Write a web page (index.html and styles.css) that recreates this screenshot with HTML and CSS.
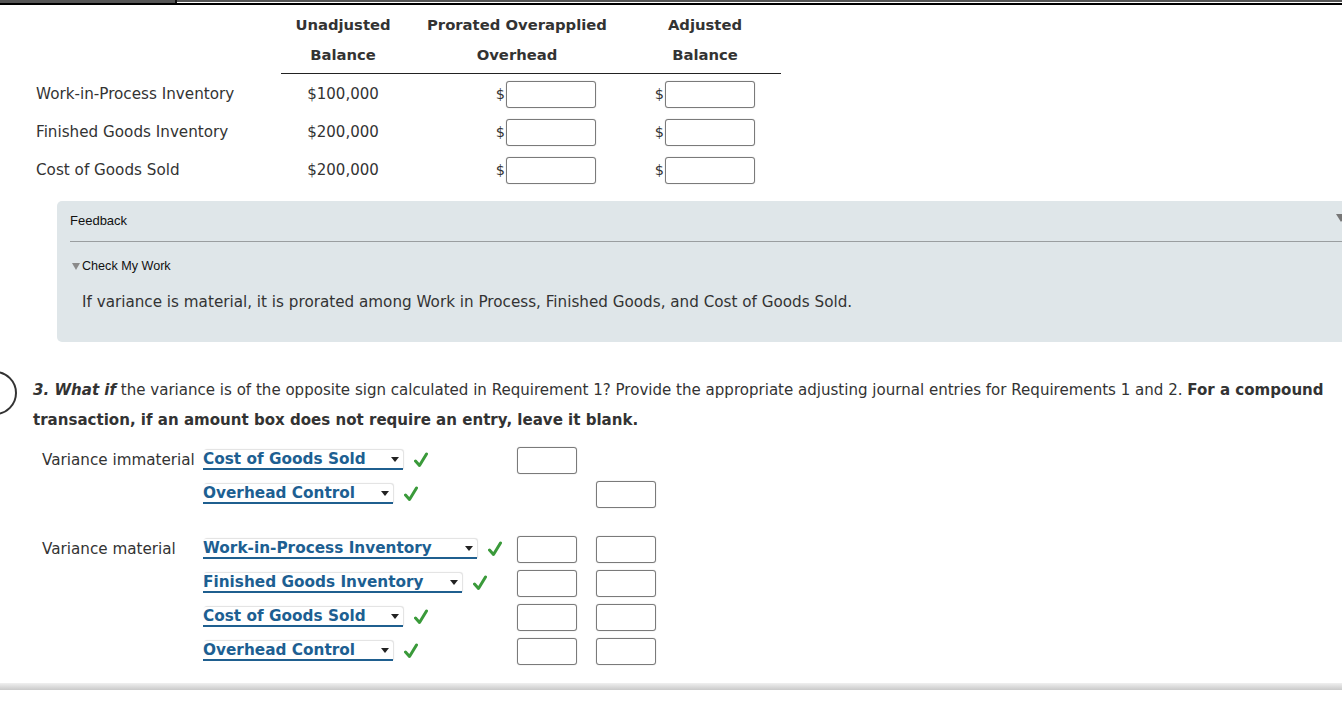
FILE: index.html
```html
<!DOCTYPE html>
<html>
<head>
<meta charset="utf-8">
<link rel="stylesheet" href="styles.css">
</head>
<body>
<div class="topbar"><div class="topbar-seg first"></div><div class="topbar-seg"></div></div>

<div class="ptable">
  <div class="cell blank"></div>
  <div class="cell head">Unadjusted<br>Balance</div>
  <div class="cell head">Prorated Overapplied<br>Overhead</div>
  <div class="cell head">Adjusted<br>Balance</div>

  <div class="cell label">Work-in-Process Inventory</div>
  <div class="cell amt">$100,000</div>
  <div class="cell inp c2"><span class="dollar">$</span><span class="box"></span></div>
  <div class="cell inp c3"><span class="dollar">$</span><span class="box"></span></div>

  <div class="cell label">Finished Goods Inventory</div>
  <div class="cell amt">$200,000</div>
  <div class="cell inp c2"><span class="dollar">$</span><span class="box"></span></div>
  <div class="cell inp c3"><span class="dollar">$</span><span class="box"></span></div>

  <div class="cell label">Cost of Goods Sold</div>
  <div class="cell amt">$200,000</div>
  <div class="cell inp c2"><span class="dollar">$</span><span class="box"></span></div>
  <div class="cell inp c3"><span class="dollar">$</span><span class="box"></span></div>
</div>

<div class="feedback">
  <div class="fb-head"><span>Feedback</span><span class="fb-tri"></span></div>
  <div class="fb-check"><span class="tri-small"></span>Check My Work</div>
  <p class="fb-text">If variance is material, it is prorated among Work in Process, Finished Goods, and Cost of Goods Sold.</p>
</div>

<div class="question">
  <div class="qcircle"></div>
  <p class="qtext"><b><i>3. What if</i></b> the variance is of the opposite sign calculated in Requirement 1? Provide the appropriate adjusting journal entries for Requirements 1 and 2. <b>For a compound</b><br><b>transaction, if an amount box does not require an entry, leave it blank.</b></p>
</div>

<div class="journal">
  <div class="jrow">
    <div class="jlabel">Variance immaterial</div>
    <div class="jacct"><span class="sel w200">Cost of Goods Sold<span class="arrow"></span></span><svg class="check" viewBox="0 0 14 16"><path d="M1.5 9 L5.5 13.5 L12.5 2" fill="none" stroke="#3a9a3a" stroke-width="3" stroke-linecap="round" stroke-linejoin="round"/></svg></div>
    <div class="jdr"><span class="box small"></span></div>
    <div class="jcr"></div>
  </div>
  <div class="jrow">
    <div class="jlabel"></div>
    <div class="jacct"><span class="sel w190">Overhead Control<span class="arrow"></span></span><svg class="check" viewBox="0 0 14 16"><path d="M1.5 9 L5.5 13.5 L12.5 2" fill="none" stroke="#3a9a3a" stroke-width="3" stroke-linecap="round" stroke-linejoin="round"/></svg></div>
    <div class="jdr"></div>
    <div class="jcr"><span class="box small"></span></div>
  </div>

  <div class="jrow spaced">
    <div class="jlabel">Variance material</div>
    <div class="jacct"><span class="sel w274">Work-in-Process Inventory<span class="arrow"></span></span><svg class="check" viewBox="0 0 14 16"><path d="M1.5 9 L5.5 13.5 L12.5 2" fill="none" stroke="#3a9a3a" stroke-width="3" stroke-linecap="round" stroke-linejoin="round"/></svg></div>
    <div class="jdr"><span class="box small"></span></div>
    <div class="jcr"><span class="box small"></span></div>
  </div>
  <div class="jrow">
    <div class="jlabel"></div>
    <div class="jacct"><span class="sel w259">Finished Goods Inventory<span class="arrow"></span></span><svg class="check" viewBox="0 0 14 16"><path d="M1.5 9 L5.5 13.5 L12.5 2" fill="none" stroke="#3a9a3a" stroke-width="3" stroke-linecap="round" stroke-linejoin="round"/></svg></div>
    <div class="jdr"><span class="box small"></span></div>
    <div class="jcr"><span class="box small"></span></div>
  </div>
  <div class="jrow">
    <div class="jlabel"></div>
    <div class="jacct"><span class="sel w200">Cost of Goods Sold<span class="arrow"></span></span><svg class="check" viewBox="0 0 14 16"><path d="M1.5 9 L5.5 13.5 L12.5 2" fill="none" stroke="#3a9a3a" stroke-width="3" stroke-linecap="round" stroke-linejoin="round"/></svg></div>
    <div class="jdr"><span class="box small"></span></div>
    <div class="jcr"><span class="box small"></span></div>
  </div>
  <div class="jrow">
    <div class="jlabel"></div>
    <div class="jacct"><span class="sel w190">Overhead Control<span class="arrow"></span></span><svg class="check" viewBox="0 0 14 16"><path d="M1.5 9 L5.5 13.5 L12.5 2" fill="none" stroke="#3a9a3a" stroke-width="3" stroke-linecap="round" stroke-linejoin="round"/></svg></div>
    <div class="jdr"><span class="box small"></span></div>
    <div class="jcr"><span class="box small"></span></div>
  </div>
</div>

<div class="bottombar"></div>
</body>
</html>
```

FILE: styles.css
```css
html, body {
  margin: 0;
  padding: 0;
  background: #fff;
  overflow: hidden;
}
body {
  font-family: "DejaVu Sans", Verdana, sans-serif;
  font-size: 15px;
  color: #333;
  width: 1342px;
  height: 708px;
}

/* top bar */
.topbar {
  display: flex;
  height: 3px;
  border-bottom: 2px solid #000;
  position: relative;
}
.topbar-seg {
  flex: 1;
  height: 2px;
  background: #555;
}
.topbar-seg.first {
  flex: 0 0 175px;
  border-right: 2px solid #111;
  height: 3px;
}

/* prorate table */
.ptable {
  display: grid;
  grid-template-columns: 36px 245px 124px 224px 152px;
  margin-top: 5px;
}
.ptable .cell:nth-child(4n+1) {
  grid-column: 2;
}
.cell.head {
  font-weight: bold;
  text-align: center;
  line-height: 30px;
  padding-bottom: 3px;
  border-bottom: 1px solid #222;
  font-size: 14.8px;
}
.cell.blank {
  height: 63px;
}
.cell.label,
.cell.amt,
.cell.inp {
  height: 38px;
  display: flex;
  align-items: center;
}
.cell.label {
  font-size: 15.2px;
}
.ptable .cell:nth-child(5),
.ptable .cell:nth-child(6),
.ptable .cell:nth-child(7),
.ptable .cell:nth-child(8) { margin-top: 1px; }
.cell.amt {
  justify-content: center;
  font-size: 15px;
}
.cell.inp {
  justify-content: flex-end;
}
.cell.inp.c2 { padding-right: 33px; }
.cell.inp.c3 { padding-right: 26px; }
.dollar {
  font-size: 14.5px;
  margin-right: 1px;
}
.box {
  display: inline-block;
  width: 88px;
  height: 25px;
  border: 1px solid #7a7a7a;
  border-radius: 3px;
  background: #fff;
  box-shadow: 0 0 1px rgba(0,0,0,0.35);
}
.box.small {
  width: 58px;
}

/* feedback */
.feedback {
  margin: 12px 0 0 57px;
  height: 141px;
  box-sizing: border-box;
  background: #dfe6e9;
  border-radius: 5px 0 0 5px;
  padding: 12px 0 0 13px;
  overflow: hidden;
  font-family: "Liberation Sans", Arial, sans-serif;
  font-size: 13px;
  color: #111;
}
.fb-head {
  display: flex;
  justify-content: space-between;
  align-items: center;
  line-height: 16px;
  padding-bottom: 12px;
  border-bottom: 1px solid #9a9ea0;
}
.fb-tri {
  width: 0;
  height: 0;
  border-left: 5px solid transparent;
  border-right: 5px solid transparent;
  border-top: 8px solid #777;
  margin-right: -4px;
  margin-top: -6px;
}
.fb-check {
  margin-top: 16px;
  line-height: 16px;
  padding-left: 2px;
  display: flex;
  align-items: center;
  font-size: 12.6px;
}
.tri-small {
  width: 0;
  height: 0;
  border-left: 4px solid transparent;
  border-right: 4px solid transparent;
  border-top: 7px solid #8a8a8a;
  margin-right: 2px;
}
.fb-text {
  margin: 18px 0 0 12px;
  line-height: 20px;
  font-family: "DejaVu Sans", Verdana, sans-serif;
  font-size: 15.2px;
  color: #333;
}

/* question */
.question {
  position: relative;
  margin-top: 33px;
  padding-left: 33px;
}
.qcircle {
  position: absolute;
  left: -27px;
  top: -4px;
  width: 40px;
  height: 40px;
  border: 2.5px solid #333;
  border-radius: 50%;
}
.qtext {
  margin: 0;
  line-height: 30px;
  font-size: 15.05px;
  white-space: nowrap;
}

/* journal */
.journal {
  margin-top: 8px;
}
.jrow {
  display: grid;
  grid-template-columns: 42px 161px 314px 79px 60px;
  height: 34px;
  align-items: center;
}
.jrow.spaced {
  margin-top: 21px;
}
.jlabel {
  grid-column: 2;
  font-size: 15.2px;
}
.jacct {
  display: flex;
  align-items: center;
}
.sel {
  position: relative;
  display: inline-block;
  box-sizing: border-box;
  height: 20px;
  line-height: 18px;
  padding-left: 0;
  background: #fff;
  border-radius: 3px 3px 0 0;
  border-bottom: 2px solid #1f5f8f;
  box-shadow: 1px -1px 1px rgba(0,0,0,0.12);
  color: #1d5f92;
  font-weight: bold;
  font-size: 15.3px;
  white-space: nowrap;
}
.w200 { width: 200px; }
.w190 { width: 190px; }
.w274 { width: 274px; }
.w259 { width: 259px; }
.arrow {
  position: absolute;
  right: 4px;
  top: 7px;
  width: 0;
  height: 0;
  border-left: 4px solid transparent;
  border-right: 4px solid transparent;
  border-top: 5px solid #222;
}
.check {
  width: 14px;
  height: 16px;
  margin-left: 11px;
}
.jdr, .jcr {
  display: flex;
  align-items: center;
}

/* bottom */
.bottombar {
  margin-top: 15px;
  height: 7px;
  background: linear-gradient(#f0f0f0, #c9c9c9);
}
```
